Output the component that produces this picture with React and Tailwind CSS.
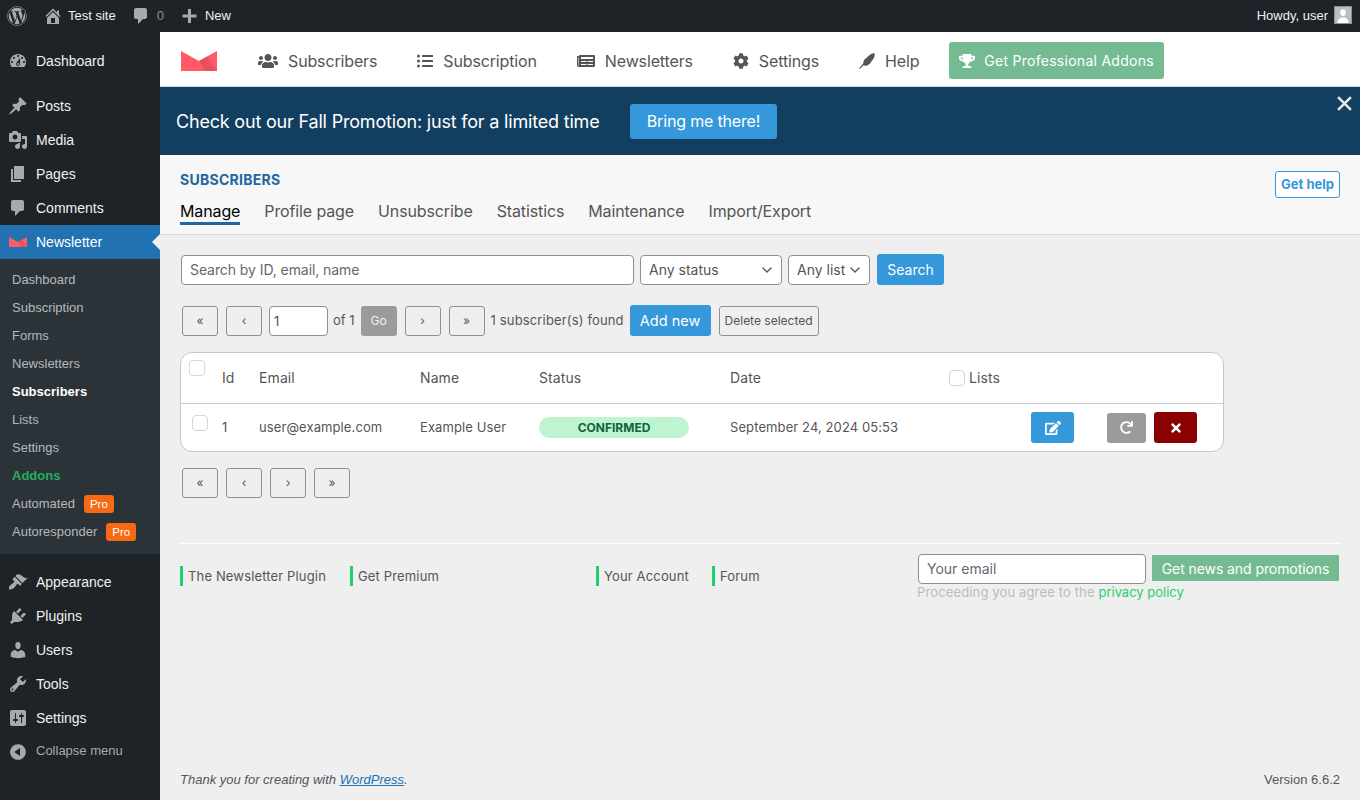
import React from "react";
import { FaWordpress, FaUsers, FaListUl, FaNewspaper, FaCog, FaTrophy, FaEdit, FaRedo, FaTimes } from "react-icons/fa";
import { ChevronDown } from "lucide-react";

const DASHICONS = {
  dashboard:
    "M3.76 16h12.48c1.1-1.37 1.76-3.11 1.76-5 0-4.42-3.58-8-8-8s-8 3.58-8 8c0 1.89.66 3.63 1.76 5zM10 4c.55 0 1 .45 1 1s-.45 1-1 1-1-.45-1-1 .45-1 1-1zM6 6c.55 0 1 .45 1 1s-.45 1-1 1-1-.45-1-1 .45-1 1-1zm8 0c.55 0 1 .45 1 1s-.45 1-1 1-1-.45-1-1 .45-1 1-1zm-5.37 5.55L12 7v6c0 1.1-.9 2-2 2s-2-.9-2-2c0-.57.24-1.08.63-1.45zM4 10c.55 0 1 .45 1 1s-.45 1-1 1-1-.45-1-1 .45-1 1-1zm12 0c.55 0 1 .45 1 1s-.45 1-1 1-1-.45-1-1 .45-1 1-1zm-5 3c0-.55-.45-1-1-1s-1 .45-1 1 .45 1 1 1 1-.45 1-1z",
  post: "M10.44 3.02l1.82-1.82 6.36 6.35-1.83 1.82c-1.05-.68-2.48-.57-3.41.36l-.75.75c-.92.93-1.04 2.35-.35 3.41l-1.83 1.82-2.41-2.41-2.8 2.79c-.42.42-3.38 2.71-3.8 2.29s1.86-3.39 2.28-3.81l2.79-2.79L4.1 9.36l1.83-1.82c1.05.69 2.48.57 3.4-.36l.75-.75c.93-.92 1.05-2.35.36-3.41z",
  media:
    "M13 11V4c0-.55-.45-1-1-1h-1.67L9 1H5L3.67 3H2c-.55 0-1 .45-1 1v7c0 .55.45 1 1 1h10c.55 0 1-.45 1-1zM7 4.5c1.38 0 2.5 1.12 2.5 2.5S8.38 9.5 7 9.5 4.5 8.38 4.5 7 5.62 4.5 7 4.5zM14 6h5v10.5c0 1.38-1.12 2.5-2.5 2.5S14 17.88 14 16.5s1.12-2.5 2.5-2.5c.17 0 .34.02.5.05V9h-3V6zm-4 8.05V13h2v3.5c0 1.38-1.12 2.5-2.5 2.5S7 17.88 7 16.5 8.12 14 9.5 14c.17 0 .34.02.5.05z",
  page: "M6 15V2h10v13H6zm-1 1h8v2H3V5h2v11z",
  comment: "M5 2h9c1.1 0 2 .9 2 2v7c0 1.1-.9 2-2 2h-2l-5 5v-5H5c-1.1 0-2-.9-2-2V4c0-1.1.9-2 2-2z",
  appearance:
    "M14.48 11.06L7.41 3.99l1.5-1.5c.5-.56 2.3-.47 3.51.32 1.21.8 1.43 1.28 2.91 2.1 1.18.64 2.45 1.26 4.45.85zm-.71.71L6.7 4.7 4.93 6.47c-.39.39-.39 1.02 0 1.41l1.06 1.06c.39.39.39 1.03 0 1.42-.6.6-1.43 1.11-2.21 1.69-.35.26-.7.53-1.01.84C1.43 13.23.4 14.96 1.05 17.25c2.29.65 4.02-.38 5.36-1.72.31-.31.58-.66.84-1.01.58-.78 1.09-1.61 1.69-2.21.39-.39 1.03-.39 1.42 0l1.06 1.06c.39.39 1.02.39 1.41 0z",
  plugin:
    "M13.11 4.36L9.87 7.6 8 5.73l3.24-3.24c.35-.34 1.05-.2 1.56.32.52.51.66 1.21.31 1.55zm-8 1.77l.91-1.12 9.01 9.01-1.19.84c-.71.71-2.63 1.16-3.82 1.16H6.14L4.9 17.26c-.59.59-1.54.59-2.12 0-.59-.58-.59-1.53 0-2.12l1.24-1.24v-3.88c0-1.13.4-3.19 1.09-3.89zm7.26 3.97l3.24-3.24c.34-.35 1.04-.21 1.55.31.52.51.66 1.21.31 1.55l-3.24 3.25z",
  users:
    "M10 9.25c-2.27 0-2.73-3.44-2.73-3.44C7 4.02 7.82 2 9.97 2c2.16 0 2.98 2.02 2.71 3.81 0 0-.41 3.44-2.68 3.44zm0 2.57L12.72 10c2.39 0 4.52 2.33 4.52 4.53v2.49s-3.65 1.13-7.24 1.13c-3.65 0-7.24-1.13-7.24-1.13v-2.49c0-2.25 1.94-4.48 4.47-4.48z",
  tools:
    "M16.68 9.77c-1.34 1.34-3.3 1.67-4.95.99l-5.41 6.52c-.99.99-2.59.99-3.58 0s-.99-2.59 0-3.57l6.52-5.42c-.68-1.65-.35-3.61.99-4.95 1.28-1.28 3.12-1.62 4.72-1.06l-2.89 2.89 2.82 2.82 2.86-2.87c.53 1.58.18 3.39-1.08 4.65zM3.81 16.21c.4.39 1.04.39 1.43 0 .4-.4.4-1.04 0-1.43-.39-.4-1.03-.4-1.43 0-.39.39-.39 1.03 0 1.43z",
  settings:
    "M18 16V4c0-1.1-.9-2-2-2H4c-1.1 0-2 .9-2 2v12c0 1.1.9 2 2 2h12c1.1 0 2-.9 2-2zM8 11h1c.55 0 1 .45 1 1s-.45 1-1 1H8v1.5c0 .28-.22.5-.5.5s-.5-.22-.5-.5V13H6c-.55 0-1-.45-1-1s.45-1 1-1h1V5.5c0-.28.22-.5.5-.5s.5.22.5.5V11zm5-2h-1c-.55 0-1-.45-1-1s.45-1 1-1h1V5.5c0-.28.22-.5.5-.5s.5.22.5.5V7h1c.55 0 1 .45 1 1s-.45 1-1 1h-1v5.5c0 .28-.22.5-.5.5s-.5-.22-.5-.5V9z",
  collapse: "M10 2.16c4.33 0 7.84 3.51 7.84 7.84s-3.51 7.84-7.84 7.84S2.16 14.33 2.16 10 5.71 2.16 10 2.16zm2 11.72V6.12L6.18 9.97z",
  home: "M16 8.5l1.53 1.53-1.06 1.06L10 4.62l-6.47 6.47-1.06-1.06L10 2.5l4 4v-2h2v4zm-6-2.46l6 5.99V18H4v-5.97zM12 17v-5H8v5h4z",
  plus: "M12 3v5.5h5.5v3H12V17H9v-5.5H3.500v-3H9V3h3z",
};

const Dashicon = ({ name, className }) => (
  <svg viewBox="0 0 20 20" fill="currentColor" className={className}>
    <path d={DASHICONS[name]} />
  </svg>
);

const NewsletterLogo = ({ className }) => (
  <svg viewBox="0 0 36 20" className={className}>
    <path d="M0 0l18 10L36 0v20H0z" fill="#ff5a65" />
    <path d="M18 10l8-4.4L36 20H24z" fill="#e5525e" />
  </svg>
);

const FeatherIcon = ({ className }) => (
  <svg viewBox="0 0 18 18" fill="currentColor" className={className}>
    <path d="M0 17.300L4.700 11.800 5.600 7.800 11.500 2.500C13.500 1 15.500.3 17.300 0c.6 1.500.4 3.500-.5 5.500l-4.800 7-4 2-2.800-.6L.9 18z" />
  </svg>
);

const TOP_MENU = [
  { label: "Posts", icon: "post" },
  { label: "Media", icon: "media" },
  { label: "Pages", icon: "page" },
  { label: "Comments", icon: "comment" },
];

const BOTTOM_MENU = [
  { label: "Appearance", icon: "appearance" },
  { label: "Plugins", icon: "plugin" },
  { label: "Users", icon: "users" },
  { label: "Tools", icon: "tools" },
  { label: "Settings", icon: "settings" },
];

const SUB_MENU = ["Dashboard", "Subscription", "Forms", "Newsletters", "Subscribers", "Lists", "Settings", "Addons", "Automated", "Autoresponder"];

const MenuItem = ({ label, icon }) => (
  <div className="flex h-[34px] items-center text-[14px] text-[#f0f0f1]">
    <div className="flex w-[36px] justify-center text-[#a7aaad]">
      <Dashicon name={icon} className="h-5 w-5" />
    </div>
    <span>{label}</span>
  </div>
);

const Sidebar = () => (
  <aside className="relative w-[160px] shrink-0 bg-[#1d2327] pt-[12px] font-['Liberation_Sans',sans-serif]">
    <MenuItem label="Dashboard" icon="dashboard" />
    <div className="mt-[11px]">
      {TOP_MENU.map((item) => (
        <MenuItem key={item.label} {...item} />
      ))}
    </div>
    <div className="relative flex h-[34px] items-center bg-[#2271b1] text-[14px] text-white">
      <div className="flex w-[36px] justify-center">
        <NewsletterLogo className="h-[10px] w-[18px]" />
      </div>
      <span>Newsletter</span>
      <div className="absolute right-0 top-[9px] h-0 w-0 border-y-[8px] border-r-[8px] border-y-transparent border-r-[#f0f0f1]" />
    </div>
    <div className="bg-[#2c3338] pb-[8px] pt-[7px] text-[13px] text-[#b4b9be]">
      {SUB_MENU.map((label) => (
        <div
          key={label}
          className={
            "flex h-[28px] items-center pl-[12px] " +
            (label === "Subscribers" ? "font-bold text-white" : label === "Addons" ? "font-bold text-[#27ae60]" : "")
          }
        >
          {label}
          {(label === "Automated" || label === "Autoresponder") && (
            <span className="ml-[9px] rounded-[3px] bg-[#f56a12] px-[6px] text-[11.5px] leading-[18px] text-white">Pro</span>
          )}
        </div>
      ))}
    </div>
    <div className="mt-[11px]">
      {BOTTOM_MENU.map((item) => (
        <MenuItem key={item.label} {...item} />
      ))}
    </div>
    <div className="flex h-[34px] items-center text-[13px] text-[#a7aaad]">
      <div className="flex w-[36px] justify-center">
        <Dashicon name="collapse" className="h-5 w-5" />
      </div>
      <span className="-mt-[2px]">Collapse menu</span>
    </div>
  </aside>
);

const AdminBar = () => (
  <header className="flex h-[32px] shrink-0 items-center bg-[#1d2327] pr-[8px] font-['Liberation_Sans',sans-serif] text-[13px] text-[#f0f0f1]">
    <FaWordpress className="ml-[7px] h-[20px] w-[20px] text-[#a7aaad]" />
    <Dashicon name="home" className="ml-[16px] h-5 w-5 text-[#a7aaad]" />
    <span className="ml-[5px]">Test site</span>
    <Dashicon name="comment" className="ml-[15px] h-5 w-5 text-[#a7aaad]" />
    <span className="ml-[6px] text-[#8c8f94]">0</span>
    <Dashicon name="plus" className="ml-[15px] h-5 w-5 text-[#a7aaad]" />
    <span className="ml-[6px]">New</span>
    <span className="ml-auto">Howdy, user</span>
    <div className="ml-[6px] -mt-[2px] h-[18px] w-[18px] overflow-hidden border border-[#8f8f8f] bg-[#bdbdbd]">
      <svg viewBox="0 0 16 16" className="h-full w-full" fill="#ffffff">
        <ellipse cx="8" cy="5.600" rx="2.800" ry="3.400" />
        <path d="M2.500 16c.2-3.600 1.800-5.500 5.500-5.500s5.300 1.900 5.500 5.500z" />
      </svg>
    </div>
  </header>
);

const NAV = [
  { label: "Subscribers", icon: FaUsers, size: "w-[20px]" },
  { label: "Subscription", icon: FaListUl, size: "w-[16px]" },
  { label: "Newsletters", icon: FaNewspaper, size: "w-[18px]" },
  { label: "Settings", icon: FaCog, size: "w-[16px]" },
  { label: "Help", icon: FeatherIcon, size: "w-[16px]" },
];

const TopNav = () => (
  <nav className="flex h-[55px] shrink-0 items-center border-b border-[#dcdcdc] bg-white pl-[21px] pt-[3px]">
    <NewsletterLogo className="mr-[41px] h-[20px] w-[36px]" />
    {NAV.map(({ label, icon: Icon, size }) => (
      <div key={label} className="mr-[40px] flex items-center text-[16px] tracking-[-0.14px] text-[#555]">
        <Icon className={"h-[16px] " + size} />
        <span className="ml-[10px]">{label}</span>
      </div>
    ))}
    <div className="-ml-[10px] flex h-[37px] w-[215px] items-center rounded-[3px] bg-[#75bb91] px-[10px] text-[14px] tracking-[0.27px] text-white">
      <FaTrophy className="h-[16px] w-[16px]" />
      <span className="ml-[9px]">Get Professional Addons</span>
    </div>
  </nav>
);

const Banner = () => (
  <div className="relative flex h-[68px] shrink-0 items-center bg-[#123f5f] pl-[16px] text-white">
    <span className="w-[424px] whitespace-nowrap text-[18px] tracking-[-0.19px]">Check out our Fall Promotion: just for a limited time</span>
    <span className="ml-[30px] w-[147px] rounded-[3px] bg-[#3498db] py-[6px] text-center text-[16px] leading-[23px] tracking-[-0.17px]">Bring me there!</span>
    <svg viewBox="0 0 14 14" className="absolute right-[8px] top-[9px] h-[15px] w-[15px]" stroke="#e8e8e8" strokeWidth="2.4">
      <path d="M1 1l12 12M13 1L1 13" />
    </svg>
  </div>
);

const TABS = ["Manage", "Profile page", "Unsubscribe", "Statistics", "Maintenance", "Import/Export"];

const PageHeader = () => (
  <div className="relative h-[80px] shrink-0 border-b border-[#dcdcdc] bg-[#f7f7f7] px-[20px] pt-[16px]">
    <div className="text-[14px] font-bold leading-[18px] tracking-[0.27px] text-[#21669e]">SUBSCRIBERS</div>
    <div className="mt-[11px] flex gap-[24px] text-[16px] tracking-[-0.12px] text-[#555]">
      {TABS.map((tab) => (
        <span key={tab} className={tab === "Manage" ? "border-b-[3px] border-[#21669e] leading-[22px] text-black" : "leading-[22px]"}>
          {tab}
        </span>
      ))}
    </div>
    <div className="absolute right-[20px] top-[16px] rounded-[3px] border border-[#3498db] bg-white px-[5px] text-[13px] font-bold leading-[25px] text-[#3498db]">
      Get help
    </div>
  </div>
);

const PageButton = ({ children }) => (
  <div className="flex h-[30px] w-[36px] items-center justify-center rounded-[3px] border border-[#8c8f94] text-[12px] text-[#555]">{children}</div>
);

const Select = ({ label, width }) => (
  <div className={"relative flex h-[30px] items-center rounded-[4px] border border-[#8c8f94] bg-white pl-[8px] text-[14px] text-[#555] " + width}>
    {label}
    <ChevronDown className="absolute right-[6px] top-[6px] h-[16px] w-[16px]" strokeWidth={2} />
  </div>
);

const Checkbox = ({ className = "" }) => <input type="checkbox" className={"h-[16px] w-[16px] appearance-none rounded-[4px] border border-[#d5d5d5] bg-white " + className} />;

const SubscribersTable = () => (
  <div className="mt-[16px] w-[1044px] overflow-hidden rounded-[12px] border border-[#c8c8c8] bg-white text-[#555]">
    <div className="relative grid h-[51px] grid-cols-[41px_37px_161px_119px_191px_1fr] items-center border-b border-[#c8c8c8] pb-[2px] text-[14px] tracking-[0.1px]">
      <Checkbox className="ml-[8px] -mt-[18px]" />
      <span>Id</span>
      <span>Email</span>
      <span>Name</span>
      <span>Status</span>
      <span>Date</span>
      <div className="absolute left-[768px] top-[14px] flex items-center">
        <Checkbox />
        <span className="ml-[4px]">Lists</span>
      </div>
    </div>
    <div className="grid h-[47px] grid-cols-[41px_37px_161px_119px_191px_301px_76px_47px_43px] items-center text-[13px] tracking-[0.1px]">
      <Checkbox className="ml-[11px] -mt-[10px]" />
      <span>1</span>
      <span>user@example.com</span>
      <span>Example User</span>
      <span className="w-[150px] rounded-full bg-[#bef4d0] text-center text-[12px] font-bold leading-[21px] tracking-normal text-[#14633a]">CONFIRMED</span>
      <span className="whitespace-nowrap">September 24, 2024 05:53</span>
      <div className="flex h-[31px] w-[43px] items-center justify-center rounded-[3px] bg-[#3498db] text-white">
        <FaEdit className="h-[16px] w-[16px]" />
      </div>
      <div className="flex h-[30px] w-[39px] items-center justify-center rounded-[3px] bg-[#9b9b9b] text-white">
        <FaRedo className="h-[13px] w-[13px]" />
      </div>
      <div className="flex h-[31px] w-[43px] items-center justify-center rounded-[3px] bg-[#8b0000] text-white">
        <FaTimes className="h-[14px] w-[12px]" />
      </div>
    </div>
  </div>
);

const FOOTER_LINKS = [
  { label: "The Newsletter Plugin", width: "w-[170px]" },
  { label: "Get Premium", width: "w-[246px]" },
  { label: "Your Account", width: "w-[116px]" },
  { label: "Forum", width: "w-[100px]" },
];

const Content = () => (
  <div className="flex flex-1 flex-col bg-[#efefef] px-[20px]">
    <div className="mt-[19px] flex items-center pl-[1px]">
      <input placeholder="Search by ID, email, name" readOnly className="h-[30px] w-[453px] rounded-[4px] border border-[#8c8f94] bg-white px-[8px] text-[14px] tracking-[-0.08px] text-[#555] outline-none placeholder:text-[#646970]" />
      <div className="ml-[6px]">
        <Select label="Any status" width="w-[142px]" />
      </div>
      <div className="ml-[6px]">
        <Select label="Any list" width="w-[82px]" />
      </div>
      <div className="ml-[7px] flex h-[31px] w-[67px] items-center justify-center rounded-[3px] bg-[#3498db] text-[14px] text-white">Search</div>
    </div>

    <div className="mt-[20px] flex h-[31px] items-center pl-[2px] text-[13px] text-[#555]">
      <PageButton>«</PageButton>
      <div className="ml-[8px]">
        <PageButton>‹</PageButton>
      </div>
      <input value="1" readOnly className="ml-[7px] h-[30px] w-[59px] rounded-[4px] border border-[#8c8f94] bg-white px-[4px] text-[13px] outline-none" />
      <span className="ml-[5px]">of 1</span>
      <div className="ml-[6px] flex h-[30px] w-[36px] items-center justify-center rounded-[3px] bg-[#9b9b9b] text-[12px] text-[#f0f0f0]">Go</div>
      <div className="ml-[8px]">
        <PageButton>›</PageButton>
      </div>
      <div className="ml-[8px]">
        <PageButton>»</PageButton>
      </div>
      <span className="ml-[6px] w-[133px] whitespace-nowrap tracking-[0.15px]">1 subscriber(s) found</span>
      <div className="ml-[6px] flex h-[31px] w-[81px] items-center justify-center rounded-[3px] bg-[#3498db] text-[14.5px] text-white">Add new</div>
      <div className="ml-[8px] flex h-[30px] w-[100px] items-center justify-center rounded-[3px] border border-[#8c8f94] text-[12px]">Delete selected</div>
    </div>

    <SubscribersTable />

    <div className="mt-[16px] flex gap-[8px] pl-[2px]">
      <PageButton>«</PageButton>
      <PageButton>‹</PageButton>
      <PageButton>›</PageButton>
      <PageButton>»</PageButton>
    </div>

    <div className="mt-[45px] flex border-t border-white pt-[10px]">
      <div className="mt-[12px] flex h-[20px] w-[738px]">
        {FOOTER_LINKS.map(({ label, width }) => (
          <div key={label} className={"border-l-[3px] border-[#1fd06d] pl-[5px] text-[13px] leading-[20px] tracking-[0.15px] text-[#555] " + width}>
            {label}
          </div>
        ))}
      </div>
      <div>
        <div className="flex items-center">
          <input placeholder="Your email" readOnly className="h-[30px] w-[228px] rounded-[4px] border border-[#8c8f94] bg-white px-[8px] pb-[1px] text-[14px] outline-none placeholder:text-[#646970]" />
          <div className="mb-[2px] ml-[6px] flex h-[26px] w-[187px] items-center justify-center bg-[#75bb91] text-[14px] tracking-[-0.08px] text-white">Get news and promotions</div>
        </div>
        <div className="-ml-[1px] text-[13px] leading-[16px] tracking-[0.14px] text-[#bbbbbb]">
          Proceeding you agree to the <span className="tracking-normal text-[#1fd06d]">privacy policy</span>
        </div>
      </div>
    </div>

    <div className="mt-auto flex h-[41px] items-center justify-between font-['Liberation_Sans',sans-serif] text-[13px] text-[#50575e]">
      <span className="italic">
        Thank you for creating with <span className="text-[#2271b1] underline">WordPress</span>.
      </span>
      <span>Version 6.6.2</span>
    </div>
  </div>
);

export default function App() {
  return (
    <div className="flex h-[800px] w-[1360px] flex-col overflow-hidden font-['Inter',sans-serif]">
      <AdminBar />
      <div className="flex min-h-0 flex-1">
        <Sidebar />
        <main className="flex min-w-0 flex-1 flex-col">
          <TopNav />
          <Banner />
          <PageHeader />
          <Content />
        </main>
      </div>
    </div>
  );
}
